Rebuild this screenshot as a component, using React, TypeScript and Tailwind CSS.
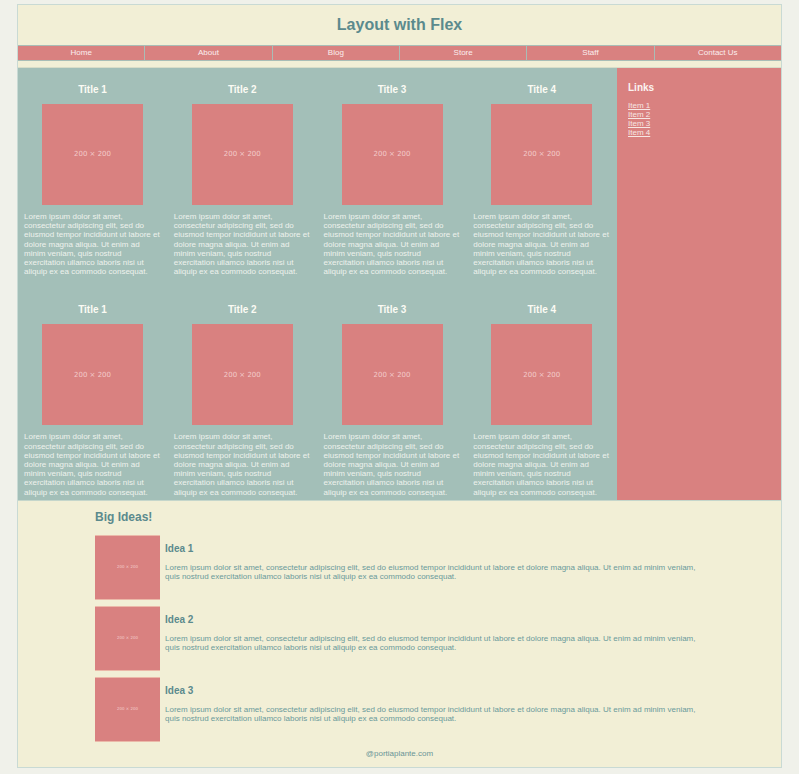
const lorem =
  'Lorem ipsum dolor sit amet, consectetur adipiscing elit, sed do eiusmod tempor incididunt ut labore et dolore magna aliqua. Ut enim ad minim veniam, quis nostrud exercitation ullamco laboris nisi ut aliquip ex ea commodo consequat.';

const navItems = ['Home', 'About', 'Blog', 'Store', 'Staff', 'Contact Us'];
const titles = ['Title 1', 'Title 2', 'Title 3', 'Title 4', 'Title 1', 'Title 2', 'Title 3', 'Title 4'];
const ideas = ['Idea 1', 'Idea 2', 'Idea 3'];

function Placeholder({ className, text }: { className: string; text: string }) {
  return (
    <div className={`flex shrink-0 items-center justify-center bg-[#d98180] text-[#f3cbca] [font-family:'DejaVu_Sans',sans-serif] ${className}`}>
      <span className={text}>200 × 200</span>
    </div>
  );
}

export default function App() {
  return (
    <div className="min-h-screen bg-[#f0f1ea] pt-[4px] [font-family:'Liberation_Sans',Arial,sans-serif]">
      <div className="mx-auto w-[765px] border border-[#c9dad4] bg-[#f2efd6]">
        <header className="flex h-[40px] items-center justify-center text-[16px] font-bold text-[#5b8a8d]">Layout with Flex</header>

        <nav className="flex border-y border-[#a9bdb6]">
          {navItems.map((item, i) => (
            <a key={item} className={`flex h-[14px] flex-1 items-center justify-center bg-[#d98180] text-[8px] text-[#fbeeee] ${i > 0 ? 'border-l border-[#a9bdb6]' : ''}`}>
              {item}
            </a>
          ))}
        </nav>

        <div className="h-[7px] border-b border-[#d9ddc8]" />

        <main className="flex">
          <section className="flex w-[599px] flex-wrap bg-[#a3bfb8]">
            {titles.map((t, i) => (
              <article key={i} className={`w-1/4 pt-[16px] pr-[6.75px] pl-[6px] ${i < 4 ? 'pb-[12px]' : 'pb-[3px]'}`}>
                <h3 className="text-center text-[10px] leading-[11px] font-bold text-[#fbfbf4]">{t}</h3>
                <Placeholder className="mx-auto mt-[9px] h-[101px] w-[101px]" text="text-[7px]" />
                <p className="mt-[7px] text-[8px] leading-[9.2px] text-[#eef2ed]">{lorem}</p>
              </article>
            ))}
          </section>
          <aside className="flex-1 bg-[#d98180] px-[11px] pt-[14px]">
            <h4 className="text-[10px] leading-[11px] font-bold text-[#fbf3f0]">Links</h4>
            <ul className="mt-[8px] text-[8px] leading-[9px] text-[#f7e6e4]">
              {['Item 1', 'Item 2', 'Item 3', 'Item 4'].map((it) => (
                <li key={it}>
                  <a className="underline">{it}</a>
                </li>
              ))}
            </ul>
          </aside>
        </main>

        <section className="border-t border-[#c5d6cb] pt-[9px] pb-[8px]">
          <div className="mx-auto w-[609px]">
            <h2 className="text-[12px] leading-[14px] font-bold text-[#5b8a8d]">Big Ideas!</h2>
            <div className="mt-[11px] flex flex-col gap-[6px]">
              {ideas.map((idea) => (
                <div key={idea} className="flex">
                  <Placeholder className="h-[65px] w-[65px] border-y border-[#ebb9a9]" text="text-[4px]" />
                  <div className="ml-[5px] pt-[8px]">
                    <h3 className="text-[10px] leading-[12px] font-bold text-[#5b8a8d]">{idea}</h3>
                    <p className="mt-[8px] text-[8px] leading-[9px] text-[#6a9a9b]">{lorem}</p>
                  </div>
                </div>
              ))}
            </div>
          </div>
          <footer className="mt-[7px] text-center text-[8px] leading-[10px] text-[#6a9597]">@portiaplante.com</footer>
        </section>
      </div>
    </div>
  );
}
